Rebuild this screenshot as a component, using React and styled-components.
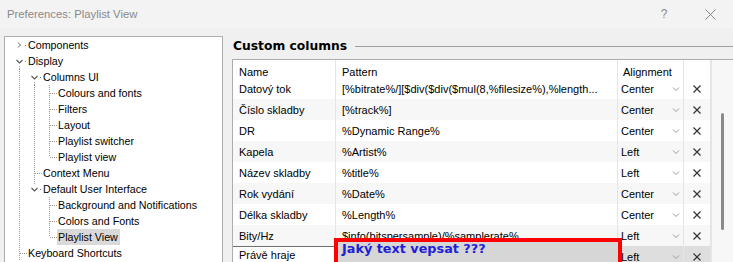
import React from 'react';
import styled, { createGlobalStyle } from 'styled-components';

const Global = createGlobalStyle`
  html, body { margin: 0; padding: 0; width: 733px; height: 262px; overflow: hidden; background: #f0f0f0; }
  body { font-family: "Liberation Sans", Arial, sans-serif; font-size: 11px; color: #000; }
  #root { width: 733px; height: 262px; }
`;

const Window = styled.div`
  width: 733px; height: 262px; display: flex; flex-direction: column; overflow: hidden; background: #f0f0f0;
`;
const TitleBar = styled.div`
  height: 28px; flex: none; display: flex; align-items: center; padding: 0 0 0 7px;
  background: #f3f3f3; color: #8a8a8a; font-size: 11.3px;
`;
const TitleText = styled.span` flex: 1; `;
const TitleBtn = styled.span`
  width: 46px; display: flex; align-items: center; justify-content: center; color: #8a8a8a; font-size: 12px;
`;
const Content = styled.div`
  flex: 1; display: flex; padding: 8px 0 0 4px; gap: 9px; min-height: 0;
`;
const Tree = styled.div`
  width: 217px; flex: none; background: #fff; border: 1px solid #adadad; border-bottom: none;
  display: flex; flex-direction: column; font-size: 10.7px;
`;
const TreeRow = styled.div`
  display: flex; align-items: center; height: 16px; padding-left: 8px; flex: none; white-space: nowrap;
`;
const Guide = styled.svg` width: 15px; height: 16px; flex: none; display: block; `;
const Joint = styled.svg` width: 14px; height: 16px; flex: none; display: block; `;
const Label = styled.span`
  line-height: 16px; height: 16px; padding: 0 2px 0 1px; background: ${p => (p.$selected ? '#d9d9d9' : 'transparent')};
`;

const Right = styled.div` flex: 1; display: flex; flex-direction: column; min-width: 0; `;
const Heading = styled.div`
  height: 20px; margin-bottom: 3px; display: flex; align-items: center; flex: none;
`;
const HeadingText = styled.span`
  font-family: "DejaVu Sans", Verdana, sans-serif; font-weight: bold; font-size: 12.3px; padding-left: 1px;
`;
const HeadingRule = styled.span` flex: 1; height: 1px; background: #a0a0a0; margin-left: 8px; margin-top: 1px; `;

const Table = styled.div`
  flex: 1; display: flex; border-top: 1px solid #adadad; border-left: 1px solid #adadad; min-height: 0; background: #fff;
`;
const Grid = styled.div` width: 478px; flex: none; display: flex; flex-direction: column; min-height: 0; `;
const Header = styled.div`
  height: 23px; flex: none; display: grid; grid-template-columns: 103px 282px 66px 27px; background: #fff; position: relative; z-index: 1;
`;
const HeadCell = styled.div`
  border-right: 1px solid #e5e5e5; display: flex; align-items: center; padding-left: ${p => p.$pl || 6}px;
`;
const Body = styled.div` flex: 1; overflow: hidden; `;
const Rows = styled.div` margin-top: -5px; `;
const Row = styled.div`
  height: 21px; display: grid; grid-template-columns: 103px 282px 66px 27px;
  background: ${p => (p.$selected ? '#dedede' : p.$alt ? '#f7f7f7' : '#fff')};
`;
const Cell = styled.div`
  border-right: 1px solid #e5e5e5; display: flex; align-items: center; padding-left: 6px; white-space: nowrap; overflow: hidden; min-width: 0;
`;
const NameCell = styled(Cell)`
  ${p => p.$editing && `background: #fff; border-top: 1px solid #6e6e6e; align-items: flex-start; padding-top: 2px;`}
`;
const PatternCell = styled(Cell)`
  position: relative; overflow: visible;
`;
const AlignCell = styled(Cell)` padding-left: 3px; padding-right: 2px; justify-content: space-between; `;
const XCell = styled(Cell)` padding-left: 0; justify-content: center; `;
const Annotation = styled.div`
  position: absolute; left: -2px; top: -8px; width: 288px; height: 30px; box-sizing: border-box;
  border: 4px solid #ff0000; background: #d6d6d6; z-index: 5; padding: 0 0 0 4px;
  font-family: "DejaVu Sans", Verdana, sans-serif; font-weight: bold; font-size: 12.8px; color: #1e1ed8; line-height: 14px;
`;
const Scroll = styled.div`
  flex: 1; background: #f7f7f7; padding: 53px 0 0 9px; border-left: 1px solid #e5e5e5;
`;
const Thumb = styled.div` width: 3px; height: 117px; border-radius: 2px; background: #8a8a8a; `;

const Chevron = () => (
  <svg width="10" height="10" viewBox="0 0 10 10"><polyline points="2,3.5 5,6.5 8,3.5" fill="none" stroke="#9a9a9a" strokeWidth="1" /></svg>
);
const XIcon = () => (
  <svg width="10" height="10" viewBox="0 0 10 10"><path d="M1.5 1.5 L8.5 8.5 M8.5 1.5 L1.5 8.5" stroke="#333" strokeWidth="1.2" /></svg>
);

const dot = { stroke: '#9a9a9a', strokeWidth: 1, strokeDasharray: '1 1' };

const GuideLine = ({ on }) => (
  <Guide viewBox="0 0 15 16">{on && <line x1="6.5" y1="0" x2="6.5" y2="16" {...dot} />}</Guide>
);

const JointDraw = ({ exp, vert }) => (
  <Joint viewBox="0 0 14 16">
    {vert === 'full' && <line x1="6.5" y1="0" x2="6.5" y2="16" {...dot} />}
    {vert === 'top' && !exp && <line x1="6.5" y1="0" x2="6.5" y2="8" {...dot} />}
    {vert === 'top' && exp && <line x1="6.5" y1="0" x2="6.5" y2="4" {...dot} />}
    {vert === 'bottom' && <line x1="6.5" y1="13" x2="6.5" y2="16" {...dot} />}
    {!exp && <line x1="7" y1="8.5" x2="14" y2="8.5" {...dot} />}
    {exp === 'closed' && <polyline points="5,5.5 7.5,8 5,10.5" fill="none" stroke="#666" strokeWidth="1" />}
    {exp === 'open' && <polyline points="3.5,7 6.5,10 9.5,7" fill="none" stroke="#555" strokeWidth="1.1" />}
    {exp && <rect x="12" y="8" width="1" height="1" fill="#777" />}
  </Joint>
);

const tree = [
  { l: 'Components', g: [], exp: 'closed', v: 'none' },
  { l: 'Display', g: [], exp: 'open', v: 'bottom' },
  { l: 'Columns UI', g: [true], exp: 'open', v: 'bottom' },
  { l: 'Colours and fonts', g: [true, true], v: 'full' },
  { l: 'Filters', g: [true, true], v: 'full' },
  { l: 'Layout', g: [true, true], v: 'full' },
  { l: 'Playlist switcher', g: [true, true], v: 'full' },
  { l: 'Playlist view', g: [true, true], v: 'top' },
  { l: 'Context Menu', g: [true], v: 'full' },
  { l: 'Default User Interface', g: [true], exp: 'open', v: 'top' },
  { l: 'Background and Notifications', g: [true, false], v: 'full' },
  { l: 'Colors and Fonts', g: [true, false], v: 'full' },
  { l: 'Playlist View', g: [true, false], v: 'top', sel: true },
  { l: 'Keyboard Shortcuts', g: [], v: 'full' },
];

const rows = [
  ['Datový tok', '[%bitrate%/][$div($div($mul(8,%filesize%),%length...', 'Center'],
  ['Číslo skladby', '[%track%]', 'Center'],
  ['DR', '%Dynamic Range%', 'Center'],
  ['Kapela', '%Artist%', 'Left'],
  ['Název skladby', '%title%', 'Left'],
  ['Rok vydání', '%Date%', 'Center'],
  ['Délka skladby', '%Length%', 'Center'],
  ['Bity/Hz', '$info(bitspersample)/%samplerate%', 'Left'],
];

export default function App() {
  return (
    <Window>
      <Global />
      <TitleBar>
        <TitleText>Preferences: Playlist View</TitleText>
        <TitleBtn>?</TitleBtn>
        <TitleBtn>
          <svg width="11" height="11" viewBox="0 0 11 11"><path d="M0.5 0.5 L10.5 10.5 M10.5 0.5 L0.5 10.5" stroke="#8a8a8a" strokeWidth="1" /></svg>
        </TitleBtn>
      </TitleBar>
      <Content>
        <Tree>
          {tree.map((t, i) => (
            <TreeRow key={i}>
              {t.g.map((on, j) => <GuideLine key={j} on={on} />)}
              <JointDraw exp={t.exp} vert={t.v} />
              <Label $selected={t.sel}>{t.l}</Label>
            </TreeRow>
          ))}
        </Tree>
        <Right>
          <Heading>
            <HeadingText>Custom columns</HeadingText>
            <HeadingRule />
          </Heading>
          <Table>
            <Grid>
              <Header>
                <HeadCell>Name</HeadCell>
                <HeadCell>Pattern</HeadCell>
                <HeadCell $pl={5}>Alignment</HeadCell>
                <HeadCell />
              </Header>
              <Body>
                <Rows>
                  {rows.map((r, i) => (
                    <Row key={i} $alt={i % 2 === 1}>
                      <NameCell>{r[0]}</NameCell>
                      <Cell>{r[1]}</Cell>
                      <AlignCell>{r[2]}<Chevron /></AlignCell>
                      <XCell><XIcon /></XCell>
                    </Row>
                  ))}
                  <Row $selected>
                    <NameCell $editing>Právě hraje</NameCell>
                    <PatternCell>
                      <Annotation>Jaký text vepsat ???</Annotation>
                    </PatternCell>
                    <AlignCell>Left<Chevron /></AlignCell>
                    <XCell><XIcon /></XCell>
                  </Row>
                </Rows>
              </Body>
            </Grid>
            <Scroll><Thumb /></Scroll>
          </Table>
        </Right>
      </Content>
    </Window>
  );
}
